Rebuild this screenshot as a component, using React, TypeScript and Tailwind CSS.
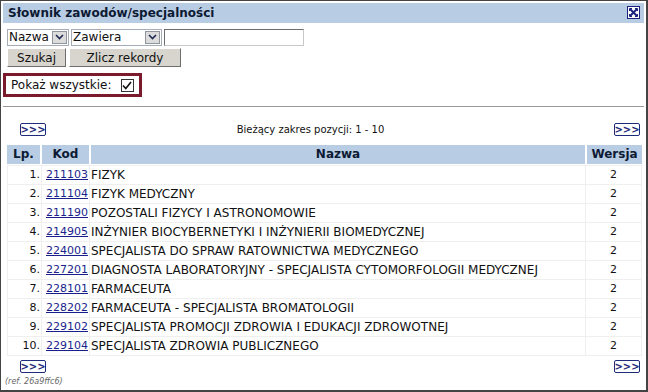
import React from 'react'

const rows = [
  { kod: '211103', nazwa: 'FIZYK' },
  { kod: '211104', nazwa: 'FIZYK MEDYCZNY' },
  { kod: '211190', nazwa: 'POZOSTALI FIZYCY I ASTRONOMOWIE' },
  { kod: '214905', nazwa: 'INŻYNIER BIOCYBERNETYKI I INŻYNIERII BIOMEDYCZNEJ' },
  { kod: '224001', nazwa: 'SPECJALISTA DO SPRAW RATOWNICTWA MEDYCZNEGO' },
  { kod: '227201', nazwa: 'DIAGNOSTA LABORATORYJNY - SPECJALISTA CYTOMORFOLOGII MEDYCZNEJ' },
  { kod: '228101', nazwa: 'FARMACEUTA' },
  { kod: '228202', nazwa: 'FARMACEUTA - SPECJALISTA BROMATOLOGII' },
  { kod: '229102', nazwa: 'SPECJALISTA PROMOCJI ZDROWIA I EDUKACJI ZDROWOTNEJ' },
  { kod: '229104', nazwa: 'SPECJALISTA ZDROWIA PUBLICZNEGO' },
]

function Chevron() {
  return (
    <svg width="9" height="6" viewBox="0 0 9 6">
      <path d="M1 1 L4.5 4.5 L8 1" stroke="#1e2a52" strokeWidth="1.6" fill="none" />
    </svg>
  )
}

function FakeSelect({ label, width }: { label: string; width: string }) {
  return (
    <div className={`flex h-[17px] items-stretch border border-[#a5acb5] bg-white ${width}`}>
      <span className="flex-1 pl-[1px] leading-[15px] text-[12px]">{label}</span>
      <span className="m-[1px] flex w-[15px] items-center justify-center border border-[#8e959d] bg-[#dcdcdc]">
        <Chevron />
      </span>
    </div>
  )
}

function NextButton() {
  return (
    <span className="flex h-[13px] w-[26px] shrink-0 items-center justify-center rounded-[2px] border border-[#1e2a7a] bg-white text-[10px] font-bold leading-none text-[#1e2a7a]">
      &gt;&gt;&gt;
    </span>
  )
}

function CloseIcon() {
  return (
    <svg width="13" height="13" viewBox="0 0 13 13">
      <rect x="0.5" y="0.5" width="12" height="12" fill="#ffffff" stroke="#1a237e" />
      <path d="M3 3 L10 10 M10 3 L3 10" stroke="#1a237e" strokeWidth="2" />
      <path d="M2.5 2.5 h2.5 M2.5 2.5 v2.5 M10.5 2.5 h-2.5 M10.5 2.5 v2.5 M2.5 10.5 h2.5 M2.5 10.5 v-2.5 M10.5 10.5 h-2.5 M10.5 10.5 v-2.5" stroke="#1a237e" strokeWidth="1" />
    </svg>
  )
}

export default function App() {
  return (
    <div className="h-[392px] w-[648px] bg-white font-['DejaVu_Sans',Verdana,sans-serif] text-[11px] text-[#111]">
      <div className="flex h-full flex-col border border-r-2 border-b-2 border-[#444] p-[2px]">
        <div className="flex h-[22px] items-center justify-between bg-[#b8cce4] pl-[5px] pr-[4px]">
          <span className="text-[12px] font-bold text-[#0d1a33]">Słownik zawodów/specjalności</span>
          <CloseIcon />
        </div>

        <div className="ml-[4px] mt-[6px] flex gap-[2px]">
          <FakeSelect label="Nazwa" width="w-[62px]" />
          <FakeSelect label="Zawiera" width="w-[91px]" />
          <input
            className="h-[17px] w-[140px] border border-t-[#6d6d6d] border-l-[#6d6d6d] border-r-[#c8c8c8] border-b-[#c8c8c8] bg-white outline-none"
            defaultValue=""
          />
        </div>

        <div className="ml-[4px] mt-[2px] flex gap-[3px]">
          <button className="h-[19px] w-[59px] border border-t-white border-l-white border-r-[#6e6e6e] border-b-[#6e6e6e] bg-[#d8d5ce] text-[12px]">
            Szukaj
          </button>
          <button className="h-[19px] w-[112px] border border-t-white border-l-white border-r-[#6e6e6e] border-b-[#6e6e6e] bg-[#d8d5ce] text-[12px]">
            Zlicz rekordy
          </button>
        </div>

        <div className="mt-[6px] flex h-[26px] w-[139px] items-center border-[3px] border-[#7b1a2c] pl-[5px] text-[12px]">
          <span>Pokaż wszystkie:</span>
          <span className="ml-[9px] flex h-[13px] w-[13px] items-center justify-center border border-[#333] bg-white">
            <svg width="10" height="9" viewBox="0 0 10 9">
              <path d="M1 4.5 L3.8 7.5 L9 1" stroke="#111" strokeWidth="1.6" fill="none" />
            </svg>
          </span>
        </div>

        <div className="mt-[9px] h-[1px] bg-[#9a9a9a]" />

        <div className="ml-[17px] mr-[4px] mt-[15px] flex items-center">
          <NextButton />
          <span className="flex-1 pr-[39px] text-center text-[10px]">Bieżący zakres pozycji: 1 - 10</span>
          <NextButton />
        </div>

        <div className="ml-[4px] mr-[2px] mt-[8px] grid grid-cols-[33px_47px_1fr_55px] gap-[2px] text-[12px]">
          <div className="h-[19px] bg-[#b8cce4] text-center font-bold leading-[19px] text-[#0d1a33]">Lp.</div>
          <div className="h-[19px] bg-[#b8cce4] text-center font-bold leading-[19px] text-[#0d1a33]">Kod</div>
          <div className="h-[19px] bg-[#b8cce4] text-center font-bold leading-[19px] text-[#0d1a33]">Nazwa</div>
          <div className="h-[19px] bg-[#b8cce4] text-center font-bold leading-[19px] text-[#0d1a33]">Wersja</div>
        </div>

        <div className="ml-[4px] mr-[2px] mt-[1px] grid grid-cols-[33px_47px_1fr_55px] gap-[1px] bg-[#efefef] p-[1px] text-[11px]">
          {rows.map((r, i) => (
            <React.Fragment key={r.kod}>
              <div className="h-[18px] bg-white pr-[1px] text-right leading-[18px]">{i + 1}.</div>
              <div className="h-[18px] bg-white pl-[4px] leading-[18px]">
                <a href="#" className="text-[#1a1f8c] underline">{r.kod}</a>
              </div>
              <div className="h-[18px] bg-white pl-[1px] text-[12px] leading-[18px]">{r.nazwa}</div>
              <div className="h-[18px] bg-white text-center leading-[18px]">2</div>
            </React.Fragment>
          ))}
        </div>

        <div className="ml-[17px] mr-[4px] mt-[4px] flex items-center justify-between">
          <NextButton />
          <NextButton />
        </div>

        <div className="ml-[2px] mt-[3px] text-[8px] italic text-[#666]">(ref. 26a9ffc6)</div>
      </div>
    </div>
  )
}
